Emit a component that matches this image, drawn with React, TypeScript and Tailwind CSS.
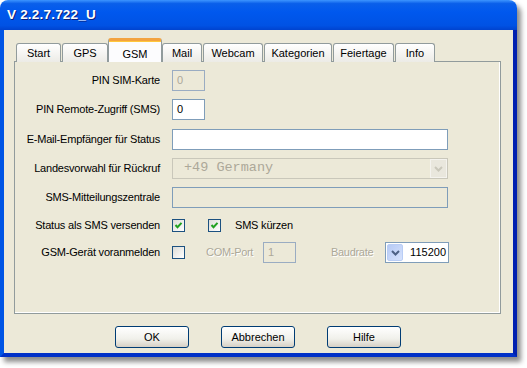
import React from "react"

const tabs = [
  { name: "Start", w: "w-[45px]" },
  { name: "GPS", w: "w-[46px]" },
  { name: "GSM", w: "w-[54px]", active: true },
  { name: "Mail", w: "w-[40px]" },
  { name: "Webcam", w: "w-[60px]" },
  { name: "Kategorien", w: "w-[68px]" },
  { name: "Feiertage", w: "w-[61px]" },
  { name: "Info", w: "w-[40px]" },
]

function Tab({ name, w, active }: { name: string; w: string; active?: boolean }) {
  if (active) {
    return (
      <div
        className={`${w} h-[24px] relative z-10 -mx-[1px] flex items-start justify-center pt-[5px] rounded-t-[3px] border-x border-[#919B9C] bg-[#FCFCFE] border-t-[3px] border-t-[#F3A340] shadow-[inset_0_1px_0_#FFC73C]`}
      >
        {name}
      </div>
    )
  }
  return (
    <div
      className={`${w} h-[19px] flex items-center justify-center rounded-t-[3px] border border-b-0 border-[#919B9C] bg-[linear-gradient(to_bottom,#FFFFFF,#ECEBE6)]`}
    >
      {name}
    </div>
  )
}

function Check({ checked }: { checked?: boolean }) {
  return (
    <div className="w-[13px] h-[13px] border border-[#1C5180] bg-[linear-gradient(135deg,#DCDCD7,#FFFFFF)] flex items-center justify-center shrink-0">
      {checked && (
        <svg width="9" height="9" viewBox="0 0 9 9">
          <path d="M1.5 4 L3.5 6.2 L7.5 1.8" fill="none" stroke="#21A121" strokeWidth="2" />
        </svg>
      )}
    </div>
  )
}

function Chevron({ color }: { color: string }) {
  return (
    <svg width="9" height="6" viewBox="0 0 9 6">
      <path d="M1 1 L4.5 4.5 L8 1" fill="none" stroke={color} strokeWidth="2" />
    </svg>
  )
}

function Row({ label, children, className = "" }: { label: string; children: React.ReactNode; className?: string }) {
  return (
    <div className={`flex items-center h-[21px] ${className}`}>
      <div className="w-[146px] text-right pr-[1px] shrink-0 tracking-[-0.2px] whitespace-nowrap">{label}</div>
      <div className="ml-[11px] flex items-center flex-1">{children}</div>
    </div>
  )
}

function Button({ children }: { children: React.ReactNode }) {
  return (
    <div className="w-[74px] h-[22px] rounded-[3px] border border-[#003C74] bg-[linear-gradient(to_bottom,#FFFFFF,#F0F0EA_60%,#D6D0C5)] flex items-center justify-center">
      {children}
    </div>
  )
}

export default function App() {
  return (
    <div className="w-[527px] h-[368px] bg-white font-['Liberation_Sans',Arial,sans-serif] text-[11px] text-black">
      <div className="w-[517px] h-[357px] flex flex-col rounded-t-[8px] overflow-hidden shadow-[4px_5px_5px_rgba(0,0,0,0.45)]">
        <div className="h-[30px] shrink-0 flex items-center pl-[7px] pt-[1px] bg-[linear-gradient(to_bottom,#3D95FF_0%,#0A5FEA_12%,#0058EE_40%,#0052E4_85%,#0043CF_100%)]">
          <span className="text-white font-bold text-[13.5px] tracking-[0.2px] [text-shadow:1px_1px_0_#0A1F7A]">V 2.2.7.722_U</span>
        </div>
        <div className="flex-1 flex flex-col bg-[#ECE9D8] border-l-[4px] border-l-[#0055E5] border-r-[4px] border-r-[#0020B0] border-b-[4px] border-b-[#0030C8]">
          <div className="pt-[8px] pl-[10px]">
            <div className="flex items-end gap-[1px] pl-[2px] -mb-[1px]">
              {tabs.map((t) => (
                <Tab key={t.name} {...t} />
              ))}
            </div>
            <div className="w-[487px] h-[253px] border border-[#919B9C] shadow-[inset_-1px_-1px_0_#FFFFFF] bg-[#ECE9D8] pt-[8px] flex flex-col">
              <Row label="PIN SIM-Karte">
                <div className="w-[33px] h-[21px] border border-[#9AACC2] bg-[#ECE9D8] text-[#ACA899] pl-[4px] flex items-center">0</div>
              </Row>
              <Row label="PIN Remote-Zugriff (SMS)" className="mt-[8px]">
                <div className="w-[33px] h-[21px] border border-[#7F9DB9] bg-white pl-[4px] flex items-center">0</div>
              </Row>
              <Row label="E-Mail-Empfänger für Status" className="mt-[9px]">
                <div className="w-[276px] h-[21px] border border-[#7F9DB9] bg-white" />
              </Row>
              <Row label="Landesvorwahl für Rückruf" className="mt-[8px]">
                <div className="w-[276px] h-[21px] border border-[#C9C7BA] bg-[#ECE9D8] flex items-center">
                  <span className="flex-1 pl-[11px] font-['Liberation_Mono','Courier_New',monospace] text-[13.5px] text-[#ACA899]">+49 Germany</span>
                  <div className="w-[17px] h-[19px] border border-[#F4F3EE] bg-[#E9E7DD] flex items-center justify-center">
                    <Chevron color="#C9C7BA" />
                  </div>
                </div>
              </Row>
              <Row label="SMS-Mitteilungszentrale" className="mt-[8px]">
                <div className="w-[276px] h-[21px] border border-[#7F9DB9] bg-[#ECE9D8]" />
              </Row>
              <Row label="Status als SMS versenden" className="mt-[7px]">
                <Check checked />
                <div className="ml-[23px]">
                  <Check checked />
                </div>
                <span className="ml-[14px] tracking-[-0.2px]">SMS kürzen</span>
              </Row>
              <Row label="GSM-Gerät voranmelden" className="mt-[6px]">
                <Check />
                <span className="ml-[21px] w-[46px] whitespace-nowrap tracking-[-0.3px] text-[#ACA899] [text-shadow:1px_1px_0_#FFFFFF]">COM-Port</span>
                <div className="ml-[11px] w-[33px] h-[21px] border border-[#9AACC2] bg-[#ECE9D8] text-[#ACA899] pl-[4px] flex items-center">1</div>
                <span className="ml-[35px] w-[44px] whitespace-nowrap tracking-[-0.3px] text-[#ACA899] [text-shadow:1px_1px_0_#FFFFFF]">Baudrate</span>
                <div className="ml-[10px] w-[64px] h-[21px] border border-[#7F9DB9] bg-white flex items-center">
                  <div className="ml-[1px] w-[16px] h-[17px] rounded-[2px] bg-[linear-gradient(135deg,#B6CAF5,#D6E2FC)] border border-[#B9CDF5] flex items-center justify-center">
                    <Chevron color="#4D6185" />
                  </div>
                  <span className="flex-1 text-right pr-[2px]">115200</span>
                </div>
              </Row>
            </div>
          </div>
          <div className="flex justify-center gap-[32px] mt-[12px] pr-[1px]">
            <Button>OK</Button>
            <Button>Abbrechen</Button>
            <Button>Hilfe</Button>
          </div>
        </div>
      </div>
    </div>
  )
}
